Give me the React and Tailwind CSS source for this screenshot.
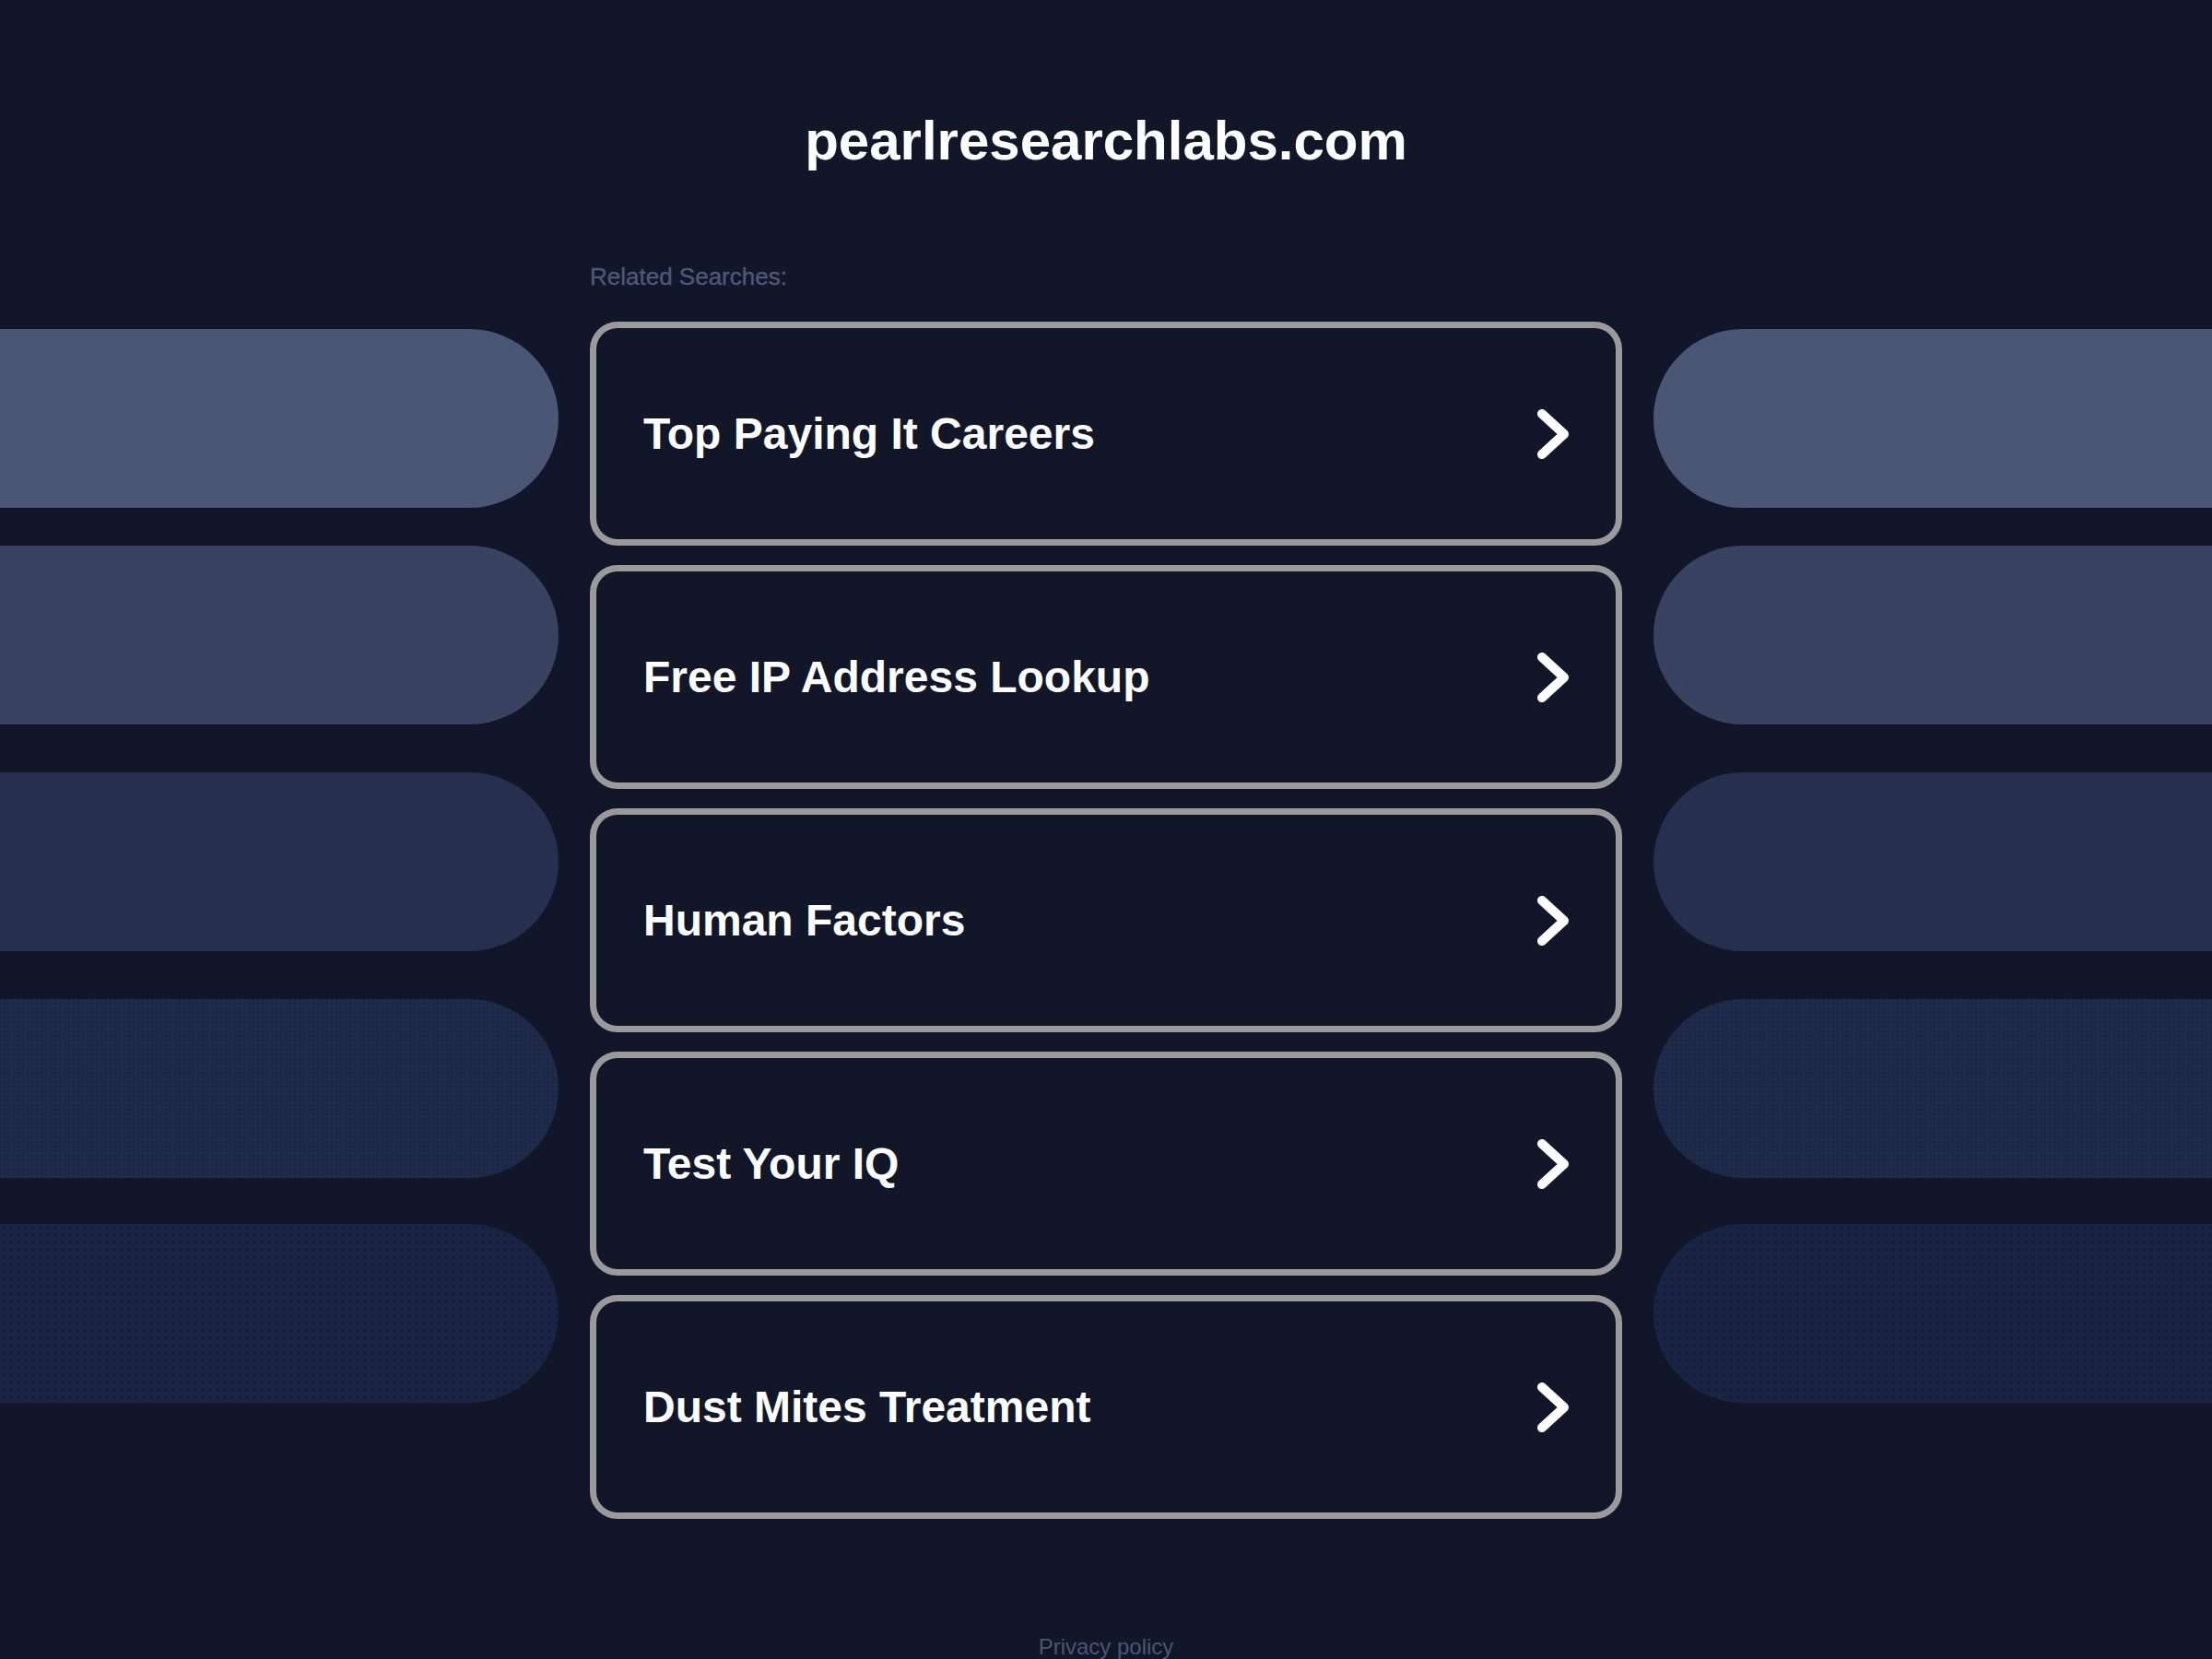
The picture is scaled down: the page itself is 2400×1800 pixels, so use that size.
import React from "react";

const SEARCHES = [
  "Top Paying It Careers",
  "Free IP Address Lookup",
  "Human Factors",
  "Test Your IQ",
  "Dust Mites Treatment",
];

// side pills: colour, top margin, optional dot texture
const PILLS = [
  { bg: "bg-[#4b5574]", mt: "mt-[8px]", tex: "" },
  { bg: "bg-[#394261]", mt: "mt-[41px]", tex: "" },
  { bg: "bg-[#262f4d]", mt: "mt-[52px]", tex: "" },
  { bg: "bg-[#1d2846]", mt: "mt-[52px]", tex: "bg-[radial-gradient(circle,#222e52_1px,transparent_1.5px)] bg-[length:5px_5px]" },
  { bg: "bg-[#1a2444]", mt: "mt-[50px]", tex: "bg-[radial-gradient(circle,#141c36_1.2px,transparent_1.8px)] bg-[length:8px_8px]" },
];

function Chevron() {
  return (
    <svg width="44" height="64" viewBox="0 0 44 64" fill="none" className="shrink-0">
      <path d="M10 10 L34 32 L10 54" stroke="#ffffff" strokeWidth="10" strokeLinecap="round" strokeLinejoin="round" />
    </svg>
  );
}

function SidePills({ side }) {
  const round = side === "left" ? "rounded-r-full" : "rounded-l-full";
  return (
    <div className="w-[606px] shrink-0 flex flex-col">
      {PILLS.map((p, i) => (
        <div key={i} className={`${p.mt} h-[194px] w-full ${round} ${p.bg} ${p.tex}`} />
      ))}
    </div>
  );
}

export default function App() {
  return (
    <div className="min-h-screen w-full overflow-hidden bg-[#111729] font-['Liberation_Sans',Arial,sans-serif]">
      <div className="pt-[117px] h-[189px] text-center text-[60px] leading-[72px] font-bold text-white">
        pearlresearchlabs.com
      </div>
      <div className="w-[1120px] mx-auto mt-[96px] text-[26px] leading-[31px] text-[#4e5878] [-webkit-text-stroke:0.4px_#4e5878]">
        Related Searches:
      </div>
      <div className="flex mt-[33px]">
        <SidePills side="left" />
        <div className="w-[1120px] shrink-0 mx-[34px] flex flex-col gap-[21px]">
          {SEARCHES.map(s => (
            <a
              key={s}
              href="#"
              className="h-[243px] flex items-center justify-between border-[7px] border-[#9a9a9a] rounded-[30px] pl-[51px] pr-[46px] text-white"
            >
              <span className="text-[48px] font-bold leading-none">{s}</span>
              <Chevron />
            </a>
          ))}
        </div>
        <SidePills side="right" />
      </div>
      <div className="mt-[124px] pb-[20px] text-center text-[24px] leading-[29px] text-[#4b5574]">
        Privacy policy
      </div>
    </div>
  );
}
